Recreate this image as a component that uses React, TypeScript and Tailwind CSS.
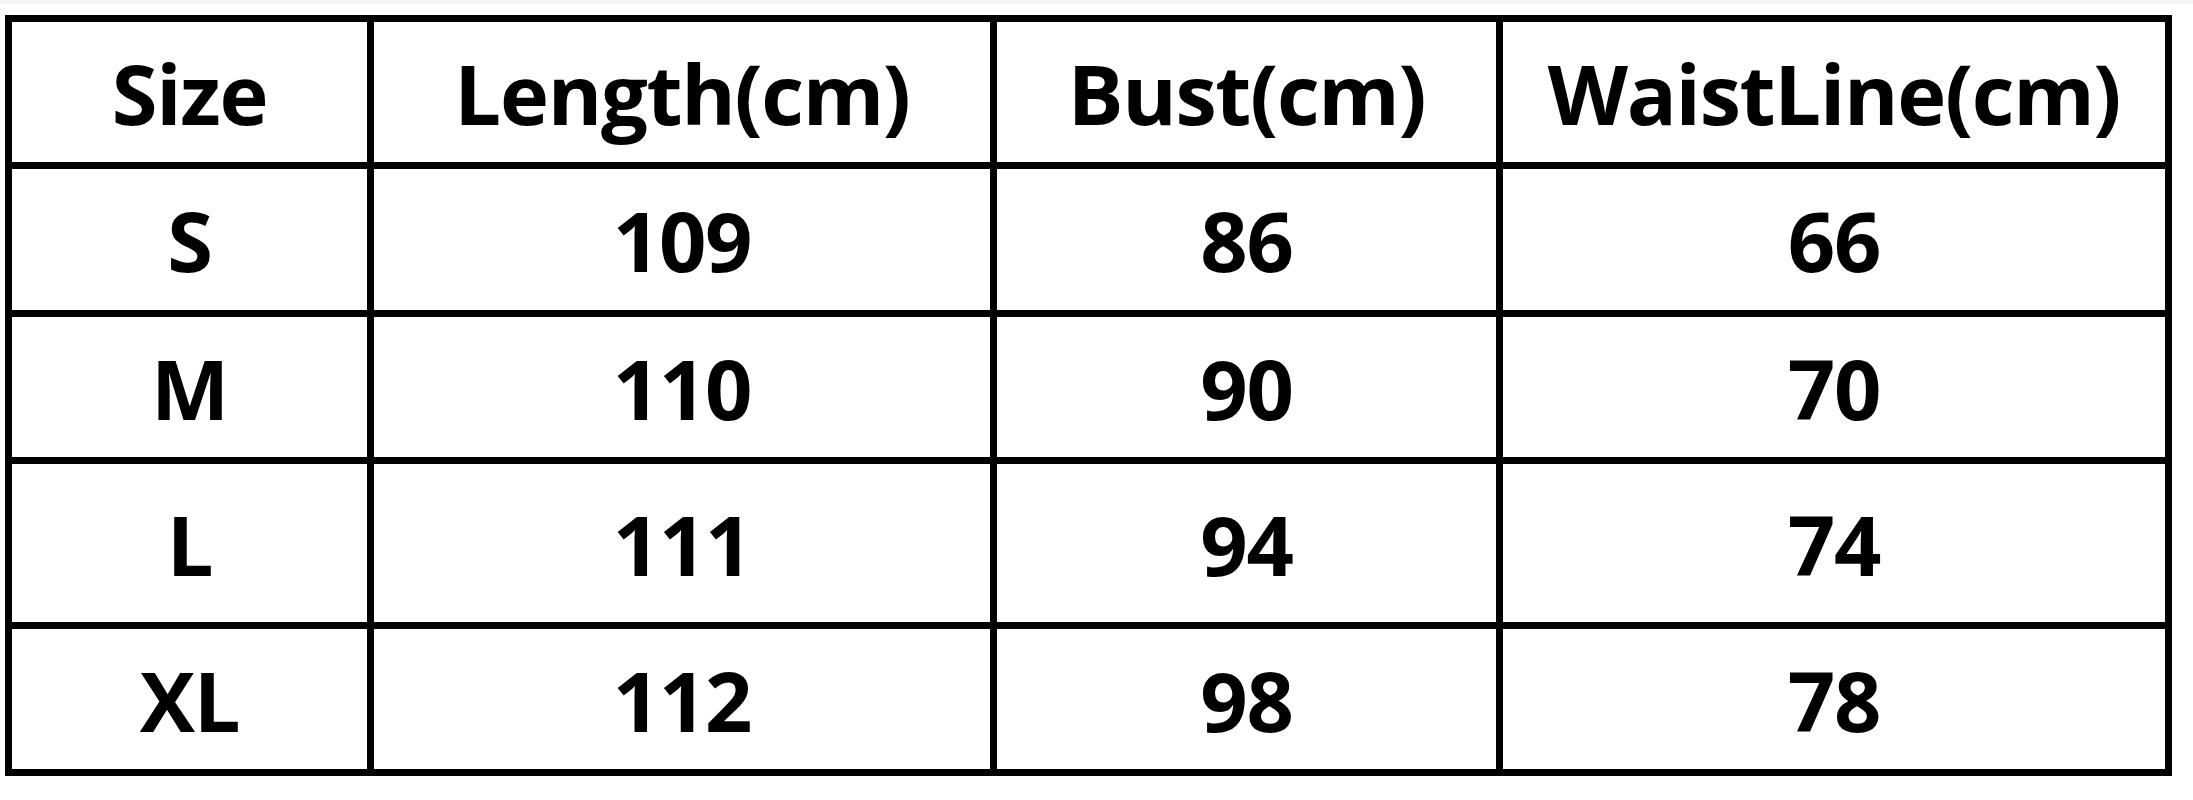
const header = ["Size", "Length(cm)", "Bust(cm)", "WaistLine(cm)"]

const rows = [
  ["S", "109", "86", "66"],
  ["M", "110", "90", "70"],
  ["L", "111", "94", "74"],
  ["XL", "112", "98", "78"],
]

function Cell({ children }: { children: React.ReactNode }) {
  return (
    <div className="bg-white flex items-center justify-center text-black text-[83px] font-bold leading-none tracking-[-1.3px]">
      {children}
    </div>
  )
}

export default function App() {
  return (
    <div
      className="w-[2193px] h-[800px] bg-white overflow-hidden"
      style={{ fontFamily: '"Open Sans", "Noto Sans", sans-serif' }}
    >
      <div className="h-[4px] bg-[#f6f6f6]" />
      <div className="ml-[5px] mt-[11px] w-fit grid grid-cols-[355px_616px_499px_662px] grid-rows-[140px_141px_140px_158px_140px] gap-[7px] p-[7px] bg-black">
        {header.map((h) => (
          <Cell key={h}>{h}</Cell>
        ))}
        {rows.map((r) =>
          r.map((v, i) => <Cell key={r[0] + i}>{v}</Cell>)
        )}
      </div>
    </div>
  )
}
